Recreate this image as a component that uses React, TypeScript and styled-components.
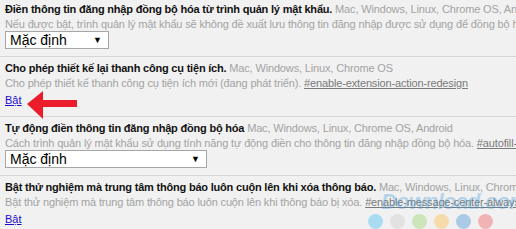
import React from 'react'
import styled, { createGlobalStyle } from 'styled-components'

const GlobalStyle = createGlobalStyle`
    html, body {
        margin: 0;
        padding: 0;
        background: #f1f1f1;
        overflow: hidden;
    }
`

const Page = styled.div`
    position: relative;
    width: 516px;
    height: 229px;
    overflow: hidden;
    background: #f1f1f1;
    font-family: 'Liberation Sans', Arial, sans-serif;
    font-size: 11px;
`

const Section = styled.div`
    padding: 3px 0 7px 5px;
    border-bottom: 1px solid #d6d6d6;
    white-space: nowrap;
    &:first-child {
        padding-top: 1px;
    }
`

const Title = styled.div`
    line-height: 16px;
    color: #111;
    font-weight: 700;
    letter-spacing: -0.2px;
`

const Platforms = styled.span`
    color: #a3a3a3;
    font-weight: 400;
    letter-spacing: -0.15px;
`

const Desc = styled.div`
    line-height: 14px;
    color: #a3a3a3;
    letter-spacing: -0.15px;
`

const Flag = styled.span`
    color: #7a7a7a;
    text-decoration: underline;
`

const Select = styled.div<{ $width: number }>`
    width: ${(p) => p.$width}px;
    height: 18px;
    box-sizing: border-box;
    background: #fff;
    border: 1px solid #a6a6a6;
    display: flex;
    align-items: center;
    justify-content: space-between;
    padding: 0 6px 0 4px;
    font-size: 14px;
    color: #000;
`

const Caret = styled.span`
    font-size: 9px;
`

const Link = styled.a`
    display: block;
    line-height: 17px;
    margin-top: 2px;
    color: #1a0dcc;
    text-decoration: underline;
    width: max-content;
`

const Arrow = styled.svg`
    position: absolute;
    left: 26px;
    top: 90px;
`

const Watermark = styled.div`
    position: absolute;
    left: 381px;
    top: 189px;
    font-size: 22px;
    font-weight: 700;
    font-style: italic;
    color: #3d98d6;
    opacity: 0.33;
    letter-spacing: -0.8px;
`

const Dots = styled.div`
    position: absolute;
    left: 368px;
    top: 214px;
    display: flex;
    gap: 7px;
`

const Dot = styled.span<{ $c: string }>`
    width: 15px;
    height: 15px;
    border-radius: 50%;
    background: ${(p) => p.$c};
`

const dotColors = ['#a9dcf3', '#e2e2e2', '#cde5b8', '#f6dbab', '#aacbe6', '#f2b3b5']

const App = () => {
    return (
        <Page>
            <GlobalStyle />
            <Section>
                <Title>
                    Điền thông tin đăng nhập đồng bộ hóa từ trình quản lý mật khẩu.{' '}
                    <Platforms>Mac, Windows, Linux, Chrome OS, Android</Platforms>
                </Title>
                <Desc>
                    Nếu được bật, trình quản lý mật khẩu sẽ không đề xuất lưu thông tin đăng nhập được sử dụng để đồng bộ hóa dữ liệu.
                </Desc>
                <Select $width={104}>
                    <span>Mặc định</span>
                    <Caret>▼</Caret>
                </Select>
            </Section>
            <Section>
                <Title>
                    Cho phép thiết kế lại thanh công cụ tiện ích.{' '}
                    <Platforms>Mac, Windows, Linux, Chrome OS</Platforms>
                </Title>
                <Desc>
                    Cho phép thiết kế thanh công cụ tiện ích mới (đang phát triển).{' '}
                    <Flag>#enable-extension-action-redesign</Flag>
                </Desc>
                <Link>Bật</Link>
            </Section>
            <Section>
                <Title>
                    Tự động điền thông tin đăng nhập đồng bộ hóa{' '}
                    <Platforms>Mac, Windows, Linux, Chrome OS, Android</Platforms>
                </Title>
                <Desc>
                    Cách trình quản lý mật khẩu sử dụng tính năng tự động điền cho thông tin đăng nhập đồng bộ hóa.{' '}
                    <Flag>#autofill-sync-credential</Flag>
                </Desc>
                <Select $width={202}>
                    <span>Mặc định</span>
                    <Caret>▼</Caret>
                </Select>
            </Section>
            <Section>
                <Title>
                    Bật thử nghiệm mà trung tâm thông báo luôn cuộn lên khi xóa thông báo.{' '}
                    <Platforms>Mac, Windows, Linux, Chrome OS</Platforms>
                </Title>
                <Desc>
                    Bật thử nghiệm mà trung tâm thông báo luôn cuộn lên khi thông báo bị xóa.{' '}
                    <Flag>#enable-message-center-always-scroll-up-upon-notification-removal</Flag>
                </Desc>
                <Link>Bật</Link>
            </Section>
            <Arrow width="52" height="30" viewBox="0 0 52 30">
                <path d="M1 14 L17 1 L17 10 L51 10 L51 17 L17 17 L17 29 Z" fill="#ec1c2b" />
            </Arrow>
            <Watermark>Download.com.vn</Watermark>
            <Dots>
                {dotColors.map((c) => (
                    <Dot key={c} $c={c} />
                ))}
            </Dots>
        </Page>
    )
}

export default App
